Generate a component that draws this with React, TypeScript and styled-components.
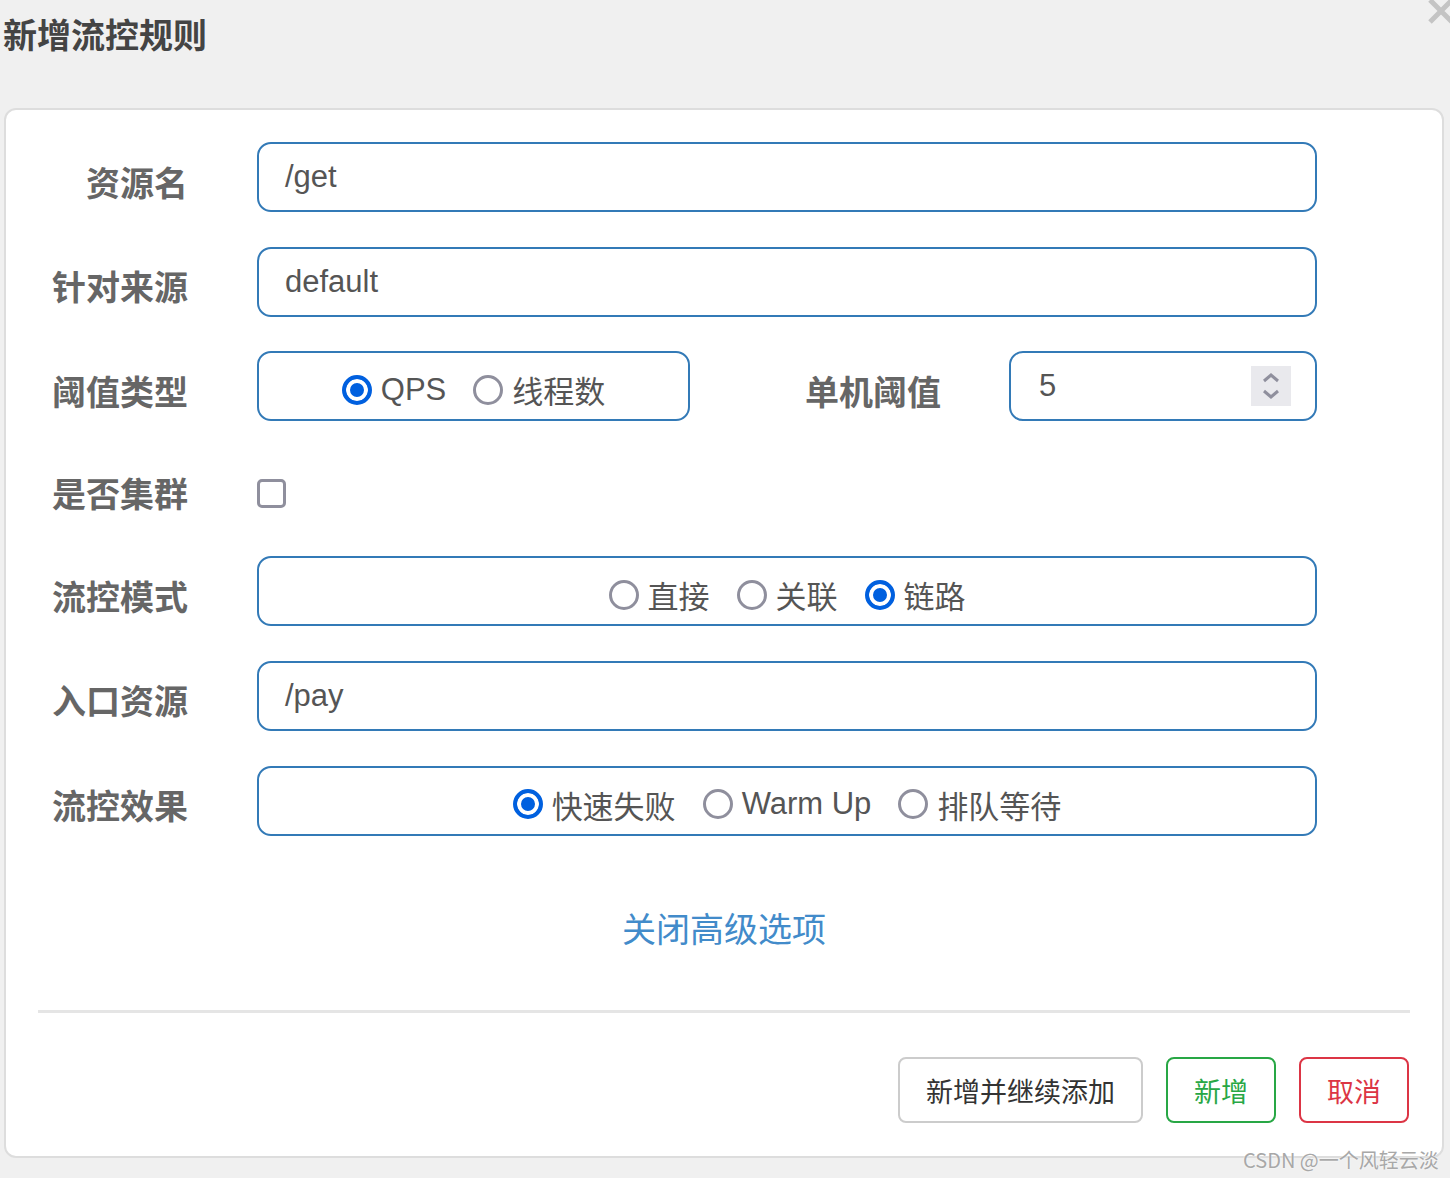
import React from 'react'
import styled, { createGlobalStyle } from 'styled-components'

const Global = createGlobalStyle`
  * { box-sizing: border-box; }
  body {
    margin: 0;
    background: #f0f0f0;
    font-family: "Liberation Sans", "Noto Sans CJK SC", sans-serif;
  }
`

const Page = styled.div`
  position: relative;
  width: 1450px;
  height: 1178px;
  overflow: hidden;
`

const Header = styled.header`
  position: relative;
  height: 108px;
  padding: 14px 0 0 3px;
`

const Title = styled.h3`
  margin: 0;
  font-family: "Noto Sans CJK SC", sans-serif;
  font-size: 34px;
  font-weight: 700;
  line-height: 1.2;
  color: #444;
`

const Close = styled.button`
  position: absolute;
  top: -3px;
  left: 1427px;
  width: 28px;
  height: 28px;
  padding: 0;
  border: none;
  background: none;
`

const Card = styled.div`
  margin-left: 4px;
  width: 1440px;
  height: 1050px;
  background: #fff;
  border: 2px solid #ddd;
  border-radius: 12px;
  padding: 32px 0 0 0;
  display: flex;
  flex-direction: column;
`

const Form = styled.div`
  display: flex;
  flex-direction: column;
  gap: 34.6px;
  padding-right: 125px;
`

const Row = styled.div<{ $h?: number }>`
  display: grid;
  grid-template-columns: 182px 1fr;
  column-gap: 69px;
  height: ${(p) => p.$h ?? 70}px;
`

const Label = styled.label`
  display: flex;
  align-items: center;
  justify-content: flex-end;
  height: 100%;
  padding-top: 8px;
  font-family: "Noto Sans CJK SC", sans-serif;
  font-size: 34px;
  font-weight: 700;
  color: #666;
  white-space: nowrap;
`

const Field = styled.div<{ $center?: boolean; $width?: number }>`
  display: flex;
  align-items: center;
  justify-content: ${(p) => (p.$center ? 'center' : 'flex-start')};
  width: ${(p) => (p.$width ? `${p.$width}px` : '100%')};
  height: 70px;
  padding: ${(p) => (p.$center ? '7px 26px 0' : '0 26px')};
  border: 2px solid #337ab7;
  border-radius: 14px;
  font-size: 31px;
  color: #555;
  gap: 27px;
`

const Split = styled.div`
  display: flex;
  align-items: center;
`

const SideLabel = styled(Label)`
  flex: 1;
  height: 70px;
  margin-right: 68px;
`

const Option = styled.span`
  display: inline-flex;
  align-items: center;
  gap: 9px;
  font-family: "Liberation Sans", "Noto Sans CJK SC", sans-serif;
  font-size: 31px;
  color: #555;
  white-space: nowrap;
`

const Dot = styled.span<{ $on?: boolean }>`
  display: inline-block;
  flex: none;
  width: 30px;
  height: 30px;
  border-radius: 50%;
  border: ${(p) => (p.$on ? '4px solid #0060df' : '3px solid #8f8f9d')};
  background: ${(p) => (p.$on ? '#0060df' : '#fff')};
  box-shadow: ${(p) => (p.$on ? 'inset 0 0 0 4px #fff' : 'none')};
`

const Check = styled.span`
  align-self: center;
  display: inline-block;
  width: 29px;
  height: 29px;
  margin-top: 10px;
  border: 3px solid #8f8f9d;
  border-radius: 5px;
  background: #fff;
`

const Value = styled.span`
  margin-left: 2px;
`

const Spinner = styled.span`
  margin-left: auto;
  margin-right: -2px;
  display: flex;
  align-items: center;
  justify-content: center;
  width: 40px;
  height: 40px;
  background: #e9e9ed;
`

const Toggle = styled.a`
  align-self: center;
  margin-top: 72px;
  font-family: "Noto Sans CJK SC", sans-serif;
  font-size: 34px;
  line-height: 1.2;
  color: #428bca;
  text-decoration: none;
`

const Divider = styled.hr`
  margin: 62px 32px 0;
  border: none;
  height: 3px;
  background: #e5e5e5;
`

const Footer = styled.div`
  display: flex;
  justify-content: flex-end;
  gap: 23px;
  margin-top: 44px;
  padding-right: 33px;
`

const Button = styled.button<{ $tone: 'plain' | 'ok' | 'cancel' }>`
  height: 66px;
  padding: 0 26px;
  min-width: 110px;
  border-radius: 8px;
  background: #fff;
  font-family: "Noto Sans CJK SC", sans-serif;
  font-size: 27px;
  border: 2px solid
    ${(p) => (p.$tone === 'ok' ? '#28a745' : p.$tone === 'cancel' ? '#dc3545' : '#ccc')};
  color: ${(p) => (p.$tone === 'ok' ? '#28a745' : p.$tone === 'cancel' ? '#dc3545' : '#333')};
`

const Watermark = styled.div`
  position: absolute;
  left: 1243px;
  top: 1145px;
  font-family: "Noto Sans CJK SC", sans-serif;
  font-size: 20px;
  color: #a8a8a8;
  white-space: nowrap;
  text-shadow: 0 0 2px #fff;
`

const Radio = ({ on, children }: { on?: boolean; children: React.ReactNode }) => (
  <Option>
    <Dot $on={on} />
    {children}
  </Option>
)

export default function App() {
  return (
    <Page>
      <Global />
      <Header>
        <Title>新增流控规则</Title>
        <Close aria-label="close">
          <svg width="28" height="28" viewBox="0 0 28 28">
            <path d="M3 3 L25 25 M25 3 L3 25" stroke="#c4c4c4" strokeWidth="5" />
          </svg>
        </Close>
      </Header>
      <Card>
        <Form>
          <Row>
            <Label>资源名</Label>
            <Field>/get</Field>
          </Row>
          <Row>
            <Label>针对来源</Label>
            <Field>default</Field>
          </Row>
          <Row>
            <Label>阈值类型</Label>
            <Split>
              <Field $center $width={433}>
                <Radio on>QPS</Radio>
                <Radio>线程数</Radio>
              </Field>
              <SideLabel>单机阈值</SideLabel>
              <Field $width={308}>
                <Value>5</Value>
                <Spinner>
                  <svg width="22" height="30" viewBox="0 0 22 30">
                    <path
                      d="M4 10 L11 4 L18 10 M4 20 L11 26 L18 20"
                      fill="none"
                      stroke="#8f8f9d"
                      strokeWidth="3"
                    />
                  </svg>
                </Spinner>
              </Field>
            </Split>
          </Row>
          <Row $h={66}>
            <Label>是否集群</Label>
            <Check />
          </Row>
          <Row>
            <Label>流控模式</Label>
            <Field $center>
              <Radio>直接</Radio>
              <Radio>关联</Radio>
              <Radio on>链路</Radio>
            </Field>
          </Row>
          <Row>
            <Label>入口资源</Label>
            <Field>/pay</Field>
          </Row>
          <Row>
            <Label>流控效果</Label>
            <Field $center>
              <Radio on>快速失败</Radio>
              <Radio>Warm Up</Radio>
              <Radio>排队等待</Radio>
            </Field>
          </Row>
        </Form>
        <Toggle href="#">关闭高级选项</Toggle>
        <Divider />
        <Footer>
          <Button $tone="plain">新增并继续添加</Button>
          <Button $tone="ok">新增</Button>
          <Button $tone="cancel">取消</Button>
        </Footer>
      </Card>
      <Watermark>CSDN @一个风轻云淡</Watermark>
    </Page>
  )
}
